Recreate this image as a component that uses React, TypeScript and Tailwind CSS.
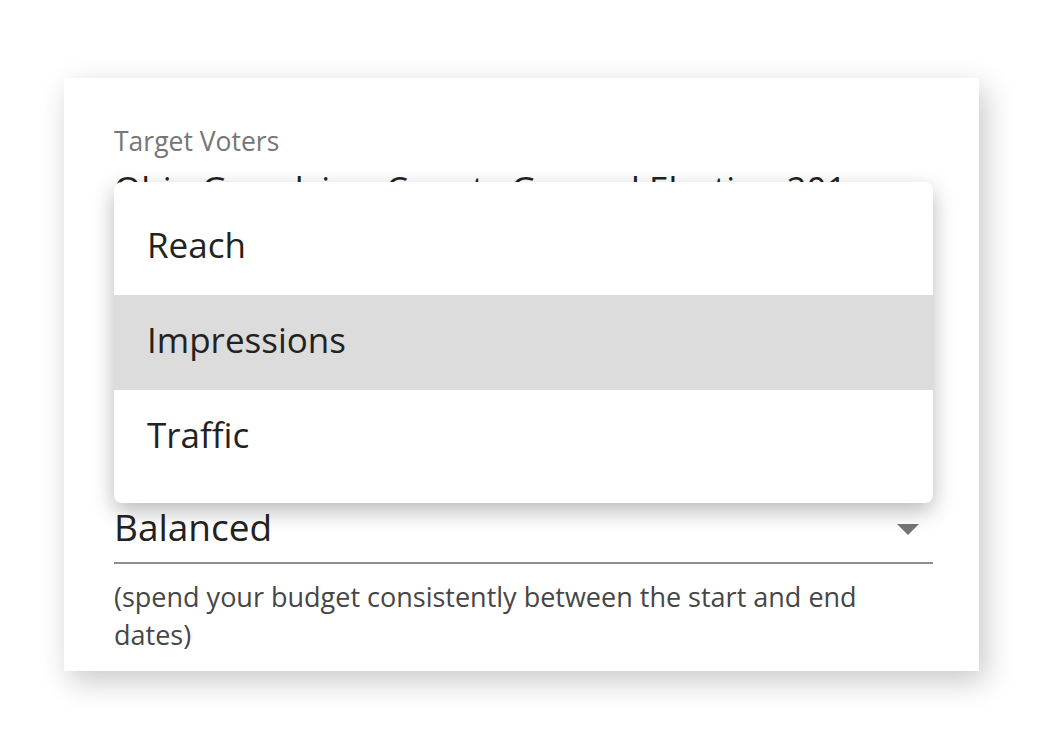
import React from 'react';

// Delivery settings card with the goal dropdown opened over it
const options = ['Reach', 'Impressions', 'Traffic'];

const App: React.FC = () => {
  const active = 'Impressions';

  return (
    <div
      className="w-full h-[750px] bg-white pt-[78px] pl-[64px]"
      style={{ fontFamily: '"Open Sans", "Noto Sans", sans-serif' }}
    >
      <div className="relative w-[915px] h-[593px] bg-white pl-[50px] pr-[46px] pt-[47px] shadow-[6px_10px_28px_rgba(0,0,0,0.22)]">
        {/* Target voters field */}
        <div className="text-[26.5px] leading-[32px] text-[#767676]">Target Voters</div>
        <div className="mt-[10px] text-[35px] leading-[44px] text-[#222] whitespace-nowrap overflow-hidden">
          Ohio Grandview County General Election 201
        </div>

        {/* Pacing select */}
        <div className="mt-[294px] flex items-center justify-between border-b-2 border-[#8e8e8e] pb-[13px]">
          <span className="text-[37px] leading-[44px] text-[#222]">Balanced</span>
          <svg width="22" height="11" viewBox="0 0 22 11" className="mr-[14px] mt-[4px]">
            <path d="M0 0 L22 0 L11 11 Z" fill="#757575" />
          </svg>
        </div>
        <p className="mt-[14px] w-[770px] text-[27px] leading-[38px] text-[#464646]">
          (spend your budget consistently between the start and end dates)
        </p>

        {/* Open dropdown menu */}
        <div className="absolute left-[50px] top-[104px] w-[819px] rounded-[8px] bg-white py-[18px] shadow-[0_8px_22px_rgba(0,0,0,0.28)]">
          {options.map((opt) => (
            <div
              key={opt}
              className={
                'h-[95px] flex items-center px-[33px] pb-[4px] text-[35px] text-[#222] ' +
                (opt === active ? 'bg-[#dcdcdc]' : 'bg-white')
              }
            >
              {opt}
            </div>
          ))}
        </div>
      </div>
    </div>
  );
};

export default App;
